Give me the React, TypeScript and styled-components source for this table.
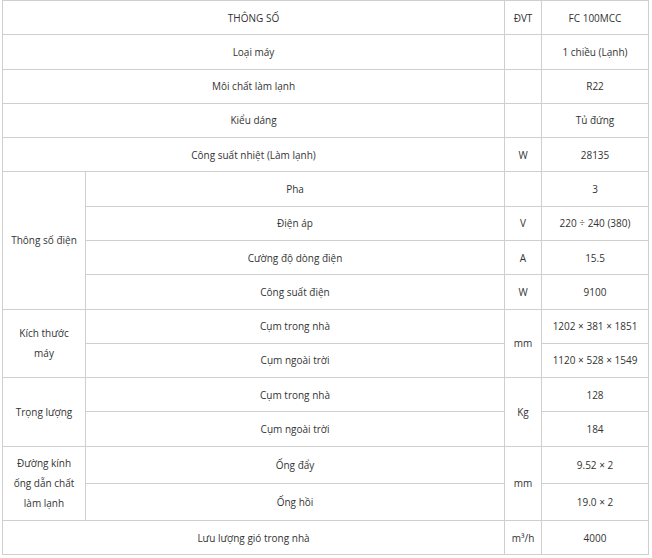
import React from "react";
import styled, { createGlobalStyle } from "styled-components";

const Global = createGlobalStyle`
  html, body { margin: 0; padding: 0; background: #fff; }
  body { font-family: "Open Sans", "Noto Sans", sans-serif; }
`;

const Wrap = styled.div`
  padding: 0 0 0 2px;
`;

const Table = styled.table`
  border-collapse: collapse;
  width: 646px;
  table-layout: fixed;
  font-family: "Open Sans", "Noto Sans", sans-serif;
  font-size: 10px;
  color: #333;
`;

const Cell = styled.td`
  border: 1px solid #cfcfcf;
  padding: 6.65px 4px;
  line-height: 20px;
  text-align: center;
  vertical-align: middle;
`;

type Row = { label: string; unit?: string; value: string };

const simple1: Row[] = [
  { label: "Loại máy", value: "1 chiều (Lạnh)" },
  { label: "Môi chất làm lạnh", value: "R22" },
  { label: "Kiểu dáng", value: "Tủ đứng" },
  { label: "Công suất nhiệt (Làm lạnh)", unit: "W", value: "28135" },
];

const dien: Row[] = [
  { label: "Pha", value: "3" },
  { label: "Điện áp", unit: "V", value: "220 ÷ 240 (380)" },
  { label: "Cường độ dòng điện", unit: "A", value: "15.5" },
  { label: "Công suất điện", unit: "W", value: "9100" },
];

type Group = { title: React.ReactNode; unit: string; rows: [string, string][] };

const groups: Group[] = [
  {
    title: (
      <>
        Kích thước
        <br />
        máy
      </>
    ),
    unit: "mm",
    rows: [
      ["Cụm trong nhà", "1202 × 381 × 1851"],
      ["Cụm ngoài trời", "1120 × 528 × 1549"],
    ],
  },
  {
    title: "Trọng lượng",
    unit: "Kg",
    rows: [
      ["Cụm trong nhà", "128"],
      ["Cụm ngoài trời", "184"],
    ],
  },
  {
    title: (
      <>
        Đường kính
        <br />
        ống dẫn chất
        <br />
        làm lạnh
      </>
    ),
    unit: "mm",
    rows: [
      ["Ống đẩy", "9.52 × 2"],
      ["Ống hồi", "19.0 × 2"],
    ],
  },
];

export default function App() {
  return (
    <>
      <Global />
      <Wrap>
        <Table>
          <colgroup>
            <col style={{ width: 83 }} />
            <col style={{ width: 419 }} />
            <col style={{ width: 37 }} />
            <col style={{ width: 107 }} />
          </colgroup>
          <tbody>
            <tr>
              <Cell colSpan={2}>THÔNG SỐ</Cell>
              <Cell>ĐVT</Cell>
              <Cell>FC 100MCC</Cell>
            </tr>
            {simple1.map((r) => (
              <tr key={r.label}>
                <Cell colSpan={2}>{r.label}</Cell>
                <Cell>{r.unit ?? ""}</Cell>
                <Cell>{r.value}</Cell>
              </tr>
            ))}
            {dien.map((r, i) => (
              <tr key={r.label}>
                {i === 0 && <Cell rowSpan={dien.length}>Thông số điện</Cell>}
                <Cell>{r.label}</Cell>
                <Cell>{r.unit ?? ""}</Cell>
                <Cell>{r.value}</Cell>
              </tr>
            ))}
            {groups.map((g, gi) =>
              g.rows.map((r, i) => (
                <tr key={`${gi}-${i}`}>
                  {i === 0 && <Cell rowSpan={g.rows.length}>{g.title}</Cell>}
                  <Cell>{r[0]}</Cell>
                  {i === 0 && <Cell rowSpan={g.rows.length}>{g.unit}</Cell>}
                  <Cell>{r[1]}</Cell>
                </tr>
              ))
            )}
            <tr>
              <Cell colSpan={2}>Lưu lượng gió trong nhà</Cell>
              <Cell>m³/h</Cell>
              <Cell>4000</Cell>
            </tr>
          </tbody>
        </Table>
      </Wrap>
    </>
  );
}
